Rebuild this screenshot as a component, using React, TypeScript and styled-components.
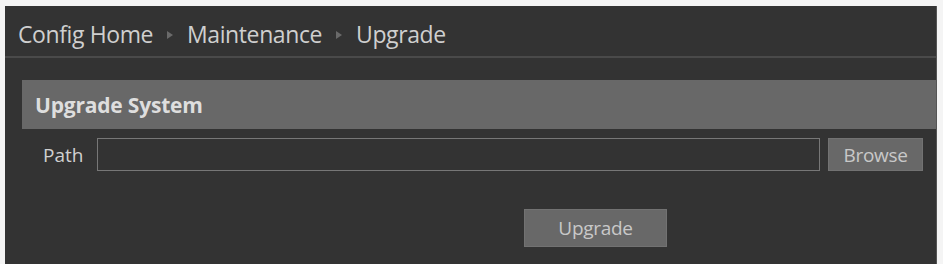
import styled, { createGlobalStyle } from 'styled-components'

const GlobalStyle = createGlobalStyle`
  html, body {
    margin: 0;
    padding: 0;
    background: #f4f4f4;
  }
  body {
    font-family: "Open Sans", "Noto Sans", sans-serif;
  }
`

const Page = styled.div`
  padding: 6px 0 0 5px;
  height: 264px;
  box-sizing: border-box;
`

const Panel = styled.div`
  width: 932px;
  height: 258px;
  background: #333333;
  border-right: 1px solid #555555;
  box-sizing: border-box;
  display: flex;
  flex-direction: column;
`

const Breadcrumb = styled.div`
  height: 44px;
  display: flex;
  align-items: center;
  gap: 14px;
  padding: 6px 0 0 13px;
  border-bottom: 2px solid #4a4a4a;
  color: #cfcfcf;
  font-size: 23px;
  letter-spacing: -0.4px;
`

const Sep = styled.span`
  width: 0;
  height: 0;
  border-top: 4px solid transparent;
  border-bottom: 4px solid transparent;
  border-left: 6px solid #6a6a6a;
  margin-top: 2px;
`

const Body = styled.div`
  padding: 22px 0 0 17px;
  display: flex;
  flex-direction: column;
`

const SectionHeader = styled.div`
  height: 49px;
  background: #686868;
  display: flex;
  align-items: center;
  padding-left: 13px;
  color: #dedede;
  font-size: 21px;
  font-weight: 700;
  letter-spacing: -0.2px;
`

const Row = styled.div`
  display: flex;
  align-items: center;
  margin-top: 9px;
  padding-left: 21px;
`

const Label = styled.span`
  width: 54px;
  color: #d0d0d0;
  font-size: 19px;
`

const PathInput = styled.div`
  width: 723px;
  height: 33px;
  margin-right: 8px;
  border: 1px solid #777777;
  box-sizing: border-box;
  background: #333333;
`

const Button = styled.div<{ $w: number; $h: number }>`
  width: ${(p) => p.$w}px;
  height: ${(p) => p.$h}px;
  background: #686868;
  color: #c8c8c8;
  font-size: 19px;
  letter-spacing: -0.3px;
  display: flex;
  align-items: center;
  justify-content: center;
  box-sizing: border-box;
  border: 1px solid #727272;
`

const Actions = styled.div`
  display: flex;
  justify-content: flex-start;
  padding-left: 502px;
  margin-top: 38px;
`

export default function App() {
  return (
    <>
      <GlobalStyle />
      <Page>
        <Panel>
          <Breadcrumb>
            <span>Config Home</span>
            <Sep />
            <span>Maintenance</span>
            <Sep />
            <span>Upgrade</span>
          </Breadcrumb>
          <Body>
            <SectionHeader>Upgrade System</SectionHeader>
            <Row>
              <Label>Path</Label>
              <PathInput />
              <Button $w={95} $h={33}>Browse</Button>
            </Row>
            <Actions>
              <Button $w={143} $h={38}>Upgrade</Button>
            </Actions>
          </Body>
        </Panel>
      </Page>
    </>
  )
}
